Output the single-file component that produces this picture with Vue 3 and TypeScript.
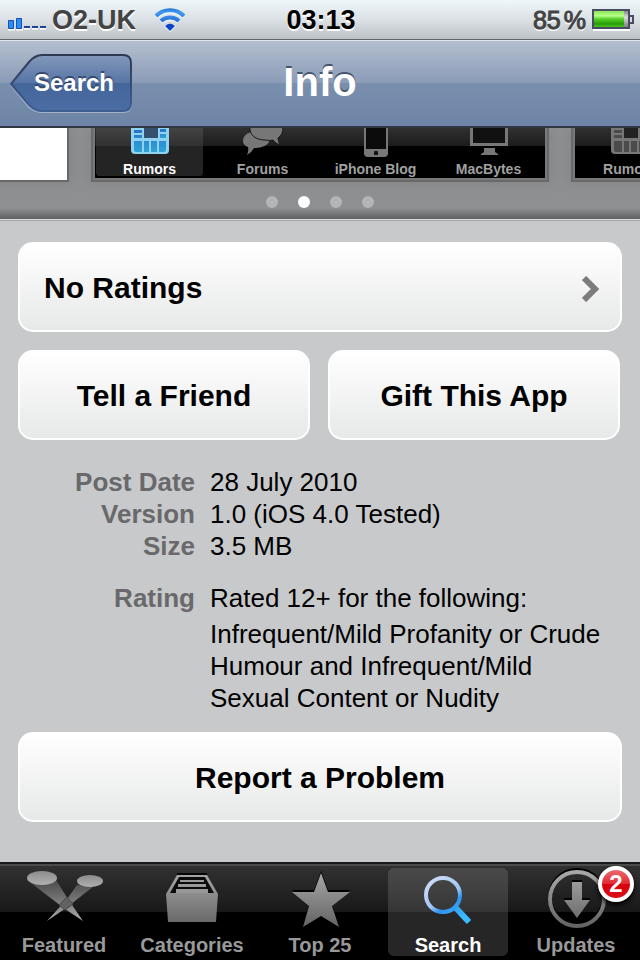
<script setup lang="ts">
import { ref } from 'vue'

type Kind = 'news' | 'chat' | 'phone' | 'monitor'

const shotTabs: { label: string; kind: Kind }[] = [
  { label: 'Rumors', kind: 'news' },
  { label: 'Forums', kind: 'chat' },
  { label: 'iPhone Blog', kind: 'phone' },
  { label: 'MacBytes', kind: 'monitor' },
]

const shots = [
  { id: 'first', tabs: [], blank: true, active: '' },
  { id: 'second', tabs: shotTabs, blank: false, active: 'Rumors' },
  { id: 'third', tabs: shotTabs.slice(0, 1), blank: false, active: '' },
]

const pages = [1, 2, 3, 4]
const page = ref(2)

const details = [
  { label: 'Post Date', value: '28 July 2010' },
  { label: 'Version', value: '1.0 (iOS 4.0 Tested)' },
  { label: 'Size', value: '3.5 MB' },
]

const tabs = ['Featured', 'Categories', 'Top 25', 'Search', 'Updates']
const current = ref('Search')
</script>

<template>
  <div class="screen">
    <header class="status">
      <div class="carrier">
        <svg class="signal" width="39" height="14" viewBox="0 0 39 14" aria-hidden="true">
          <path d="M0 12.500h7M8 12.500h7M16 11.500h6M24 11.500h6M32 11.500h6" stroke="#fff" stroke-width="2" />
          <path d="M.5 3.500h5v8h-5zM8.500 1.500h5v10h-5z" fill="#2b8df4" stroke="#1450b4" />
          <path d="M16 10h6M24 10h6M32 10h6" stroke="#1d3f96" stroke-width="2" />
        </svg>
        <span>O2-UK</span>
        <svg class="wifi" width="34" height="26" viewBox="0 0 34 26" aria-hidden="true">
          <defs>
            <linearGradient id="wifi" x1="0" y1="0" x2="0" y2="26" gradientUnits="userSpaceOnUse">
              <stop offset="0" stop-color="#1668cc" /><stop offset=".2" stop-color="#3f9bee" /><stop offset="1" stop-color="#0b3fc0" />
            </linearGradient>
          </defs>
          <path d="M17 25L11 19L17 16L23 19Z" fill="#fff" />
          <path d="M3 10A20 20 0 0 1 31 10M8 15A13 13 0 0 1 26 15" fill="none" stroke="#fff" stroke-width="4" />
          <path d="M3 9A20 20 0 0 1 31 9M8 14A13 13 0 0 1 26 14" fill="none" stroke="url(#wifi)" stroke-width="4" />
          <path d="M17 24L12 19Q17 14 22 19Z" fill="#0b43c4" />
        </svg>
      </div>
      <time class="clock">03:13</time>
      <div class="power">
        <span class="charge">85</span><span>%</span>
        <svg width="42" height="22" viewBox="0 0 42 22" aria-label="Battery">
          <defs>
            <linearGradient id="cell" x1="0" y1="0" x2="0" y2="1">
              <stop offset="0" stop-color="#8fe35c" /><stop offset=".3" stop-color="#b4ff86" />
              <stop offset=".5" stop-color="#59cf2c" /><stop offset=".8" stop-color="#279c07" /><stop offset="1" stop-color="#4bc51f" />
            </linearGradient>
            <linearGradient id="rest" x1="0" y1="0" x2="0" y2="1">
              <stop offset="0" stop-color="#777" /><stop offset=".4" stop-color="#ddd" /><stop offset="1" stop-color="#777" />
            </linearGradient>
          </defs>
          <path d="M1 21h37" stroke="#fff" stroke-width="2" />
          <rect x="1" y="1" width="36" height="18" fill="url(#rest)" stroke="#484c63" stroke-width="2" />
          <rect x="2" y="2" width="30" height="16" fill="url(#cell)" />
          <path d="M38 7h3v7h-3" fill="#ddd" stroke="#484c63" stroke-width="2" />
        </svg>
      </div>
    </header>

    <div class="navbar">
      <button class="back" type="button">
        <svg width="124" height="60" viewBox="0 0 124 60" aria-hidden="true">
          <defs>
            <linearGradient id="back" x1="0" y1="0" x2="0" y2="1">
              <stop offset="0" stop-color="#8399bb" /><stop offset=".5" stop-color="#5674a4" />
              <stop offset=".5" stop-color="#45669b" /><stop offset="1" stop-color="#4a6da4" />
            </linearGradient>
            <linearGradient id="edge" x1="0" y1="0" x2="0" y2="1">
              <stop offset="0" stop-color="#2c3a52" /><stop offset="1" stop-color="#3f5f92" />
            </linearGradient>
          </defs>
          <path d="M1 31L19 9Q25 2 33 2H113Q121 2 121 10V50Q121 58 113 58H33Q25 58 19 53Z" fill="none" stroke="#a3b2c9" stroke-width="2" />
          <path d="M1 30L19 8Q25 1 32 1H113Q121 1 121 9V49Q121 57 113 57H32Q25 57 19 51Z" fill="url(#back)" stroke="url(#edge)" stroke-width="2" />
        </svg>
        <span>Search</span>
      </button>
      <h1>Info</h1>
    </div>

    <section class="gallery" aria-label="Screenshots">
      <div class="shots">
        <div v-for="shot in shots" :key="shot.id" class="shot" :class="{ blank: shot.blank }">
          <div v-for="tab in shot.tabs" :key="tab.label" class="shot-tab" :class="{ on: tab.label === shot.active }">
            <svg v-if="tab.kind === 'news'" width="40" height="26" viewBox="0 0 40 26">
              <defs>
                <linearGradient id="panel" x1="0" y1="0" x2="0" y2="1">
                  <stop offset="0" stop-color="#2a72c8" /><stop offset="1" stop-color="#2fa4d8" />
                </linearGradient>
              </defs>
              <path class="tile" d="M1 0H39V22Q39 26 35 26H5Q1 26 1 22Z" />
              <path class="ink" d="M4 2h8v3H4zM4 7h8v3H4zM4 13h8v11H6q-2 0-2-2zM14 13h5v11h-5zM21 13h6v11h-6zM29 13h7v9q0 2-2 2h-5z" />
              <path class="photo" d="M14 0h14v10H14z" />
              <path class="ink" d="M30 1h6v3h-6zM30 6h6v4h-6z" />
            </svg>
            <svg v-else-if="tab.kind === 'chat'" width="42" height="27" viewBox="0 0 42 27">
              <path class="glyph" d="M1 13C1 7 7 3 16 4C25 5 29 9 27 14C25 18 18 20 12 20Q10 24 5 27Q7 22 6 19Q1 17 1 13Z" />
              <path class="glyph rim" d="M8 -1C7 7 14 12 23 12Q27 13 31 12Q34 16 38 17Q36 13 36 10Q41 7 41 -1Z" />
            </svg>
            <svg v-else-if="tab.kind === 'phone'" width="24" height="29" viewBox="0 0 24 29">
              <path class="glyph" d="M0 0H24V25Q24 29 20 29H4Q0 29 0 25Z" />
              <path d="M2 0H22V21H2Z" fill="#0c0c0c" /><rect x="10" y="23" width="4" height="4" rx="1" fill="#111" />
            </svg>
            <svg v-else width="40" height="27" viewBox="0 0 40 27">
              <path class="glyph" d="M1 0H39V18H1Z" /><path d="M4 0H36V15H4Z" fill="#111" />
              <path class="glyph" d="M15 20H26V24L29 26V27H12V26L15 24Z" />
            </svg>
            <span>{{ tab.label }}</span>
          </div>
        </div>
      </div>
      <div class="dots">
        <button v-for="n in pages" :key="n" type="button" :class="{ on: n === page }" :aria-label="`Page ${n}`" @click="page = n"></button>
      </div>
    </section>

    <main>
      <button class="card ratings" type="button">
        <span>No Ratings</span>
        <svg width="18" height="26" viewBox="0 0 18 26" aria-hidden="true"><path d="M2 2L13 13L2 24" fill="none" stroke="#7c7c7c" stroke-width="6" /></svg>
      </button>
      <div class="pair">
        <button class="card" type="button">Tell a Friend</button>
        <button class="card" type="button">Gift This App</button>
      </div>
      <dl>
        <template v-for="item in details" :key="item.label">
          <dt>{{ item.label }}</dt>
          <dd>{{ item.value }}</dd>
        </template>
        <dt class="spaced">Rating</dt>
        <dd class="spaced">
          <p>Rated 12+ for the following:</p>
          <p class="reason">Infrequent/Mild Profanity or Crude Humour and Infrequent/Mild Sexual Content or Nudity</p>
        </dd>
      </dl>
      <button class="card" type="button">Report a Problem</button>
    </main>

    <nav class="tabbar">
      <svg class="defs" width="0" height="0" aria-hidden="true">
        <defs>
          <linearGradient id="steel" x1="0" y1="4" x2="0" y2="58" gradientUnits="userSpaceOnUse">
            <stop offset="0" stop-color="#a8a8a8" /><stop offset="1" stop-color="#646464" />
          </linearGradient>
          <linearGradient id="beam" x1="0" y1="12" x2="0" y2="52" gradientUnits="userSpaceOnUse">
            <stop offset="0" stop-color="#555" stop-opacity=".8" /><stop offset=".7" stop-color="#8c8c8c" /><stop offset="1" stop-color="#aaa" />
          </linearGradient>
          <linearGradient id="lamp" x1="0" y1="0" x2="0" y2="1">
            <stop offset="0" stop-color="#8c8c8c" /><stop offset="1" stop-color="#b0b0b0" />
          </linearGradient>
          <linearGradient id="glow" x1="30" y1="8" x2="60" y2="52" gradientUnits="userSpaceOnUse">
            <stop offset="0" stop-color="#d3def7" /><stop offset=".5" stop-color="#9fc5f6" />
            <stop offset=".65" stop-color="#2f93f2" /><stop offset="1" stop-color="#3bbcff" />
          </linearGradient>
        </defs>
      </svg>
      <a v-for="tab in tabs" :key="tab" href="#" :class="{ on: tab === current }" @click.prevent="current = tab">
        <svg width="96" height="62" viewBox="0 0 96 62" aria-hidden="true">
          <g v-if="tab === 'Featured'">
            <path d="M61 17L51 31L31 53L50 40L78 18Z" fill="url(#beam)" />
            <path d="M15 15L40 12L52 31L67 53L49 41Z" fill="url(#beam)" />
            <path d="M51 29L57 36L49 42L43 37Z" fill="#626262" stroke="#484848" />
            <ellipse cx="26" cy="10" rx="15" ry="7" fill="url(#lamp)" />
            <ellipse cx="74" cy="13" rx="13" ry="6" fill="url(#lamp)" />
          </g>
          <g v-else-if="tab === 'Categories'" fill="url(#steel)">
            <path d="M33 6H63" stroke="#050505" stroke-width="2" />
            <path d="M33 7H63L74 26L72 54H24L22 26Z" />
            <path d="M35 9H61L70 25H26Z" fill="#0b0b0b" />
            <path d="M36 12H60V14H36ZM34 16H62V19H34ZM32 21H64V25H32Z" fill="#999" />
          </g>
          <g v-else-if="tab === 'Top 25'">
            <path d="M49 5L56 24H78L60 38L67 59L49 48L31 59L37 38L20 24H42Z" fill="#000" transform="translate(0 -2)" />
            <path d="M49 5L56 24H78L60 38L67 59L49 48L31 59L37 38L20 24H42Z" fill="url(#steel)" />
          </g>
          <g v-else-if="tab === 'Search'" fill="none" stroke="url(#glow)">
            <circle cx="43" cy="27" r="17" stroke-width="4" />
            <path d="M55 39L69 54" stroke-width="6" />
          </g>
          <g v-else>
            <circle cx="49" cy="29" r="27" fill="none" stroke="#000" stroke-width="4" />
            <circle cx="49" cy="31" r="27" fill="none" stroke="url(#steel)" stroke-width="4" />
            <path d="M44 12H54V14H44ZM36 30H62V32H36Z" fill="#000" />
            <path d="M44 14H54V32H62L49 50L36 32H44Z" fill="url(#steel)" />
          </g>
        </svg>
        <span>{{ tab }}</span>
        <b v-if="tab === 'Updates'" class="badge">2</b>
      </a>
    </nav>
  </div>
</template>

<style>
body {
  margin: 0;
  background: #c8c9cb;
}
</style>

<style scoped>
* {
  box-sizing: border-box;
}
.screen {
  display: flex;
  flex-direction: column;
  min-height: 100vh;
  overflow: hidden;
  font-family: "Liberation Sans", Arial, sans-serif;
  color: #000;
  background: #c8c9cb;
}
button {
  margin: 0;
  padding: 0;
  border: 0;
  background: none;
  font: inherit;
  color: inherit;
}
svg {
  display: block;
  flex: none;
}
.status {
  display: grid;
  grid-template-columns: 1fr auto 1fr;
  align-items: center;
  height: 40px;
  padding: 0 6px 0 8px;
  border-bottom: 1px solid #5f656b;
  background: linear-gradient(#eff7fa, #dbe1e4 50%, #bcc2c5);
  font-size: 27px;
  font-weight: bold;
  line-height: 36px;
  text-shadow: 0 2px #fff;
}
.carrier,
.power {
  display: flex;
  align-items: center;
  color: #434343;
}
.carrier {
  gap: 5px;
}
.signal {
  margin-top: 8px;
}
.wifi {
  margin-left: 12px;
}
.power {
  justify-content: flex-end;
  font-size: 25px;
  font-weight: normal;
  -webkit-text-stroke: 1px #434343;
}
.power svg {
  margin-left: 6px;
}
.charge {
  margin-right: 3px;
}
.navbar {
  display: grid;
  grid-template-columns: 1fr auto 1fr;
  align-items: center;
  height: 88px;
  padding: 0 10px;
  border-top: 1px solid #e0e6ed;
  border-bottom: 2px solid #2d3642;
  background: linear-gradient(#b3bfcf, #8a9bb7 50%, #7a8fae 50%, #6d84a6);
  color: #fff;
  text-shadow: 0 -2px #46556d;
}
.back {
  display: grid;
  justify-self: start;
  align-items: center;
  font-size: 24px;
  font-weight: bold;
  text-shadow: 0 -2px #34496d;
}
.back svg,
.back span {
  grid-area: 1 / 1;
}
.back span {
  padding: 0 0 2px 4px;
}
h1 {
  margin: 0;
  padding-bottom: 4px;
  font-size: 40px;
  line-height: 48px;
}
.gallery {
  display: flex;
  flex-direction: column;
  align-items: center;
  height: 93px;
  overflow: hidden;
  border-bottom: 1px solid #a2a3a5;
  background: linear-gradient(#8f9092 80px, #606163 91px, #dcdcdd 91px);
}
.shots {
  display: flex;
  gap: 22px;
}
.shot {
  display: flex;
  flex: none;
  width: 458px;
  height: 54px;
  padding: 0 2px 2px 0;
  border: solid #68696b;
  border-width: 0 2px 2px;
  box-shadow: inset 2px 0 #79797a, inset -2px 0 #79797a, inset 0 -2px #79797a, 0 0 12px #7779;
  background: linear-gradient(#303030, #1c1c1c 18px, #000 18px);
}
.shot.blank {
  background: #fff;
  box-shadow: 0 0 12px #7779;
}
.shot-tab {
  display: flex;
  flex: none;
  flex-direction: column;
  align-items: center;
  justify-content: space-between;
  width: 25%;
  padding-bottom: 2px;
  font-size: 14px;
  font-weight: bold;
  line-height: 14px;
  white-space: nowrap;
  color: #a0a0a0;
}
.shot-tab.on {
  border: solid transparent;
  border-width: 0 3px 2px;
  padding-bottom: 0;
  border-radius: 0 0 6px 6px;
  background: linear-gradient(#434343, #303030 18px, #242424 18px) padding-box;
  color: #fff;
}
.glyph {
  fill: #777;
}
.rim {
  stroke: #181818;
}
.tile {
  fill: #777;
}
.ink {
  fill: #4b4b4b;
}
.photo {
  fill: #222;
}
.on .tile {
  fill: #8fd3f0;
}
.on .ink {
  fill: url(#panel);
}
.on .photo {
  fill: #34506c;
}
.dots {
  display: flex;
  gap: 20px;
  margin-top: 14px;
}
.dots button {
  width: 12px;
  height: 12px;
  border-radius: 50%;
  background: #b4b5b7;
}
.dots button.on {
  background: #fff;
}
main {
  display: flex;
  flex: 1;
  flex-direction: column;
  gap: 18px;
  padding: 21px 18px 40px;
}
.card {
  min-height: 90px;
  padding-top: 2px;
  border: 2px solid #fff;
  border-radius: 15px;
  background: linear-gradient(#fff, #e7e8e8);
  font-size: 30px;
  font-weight: bold;
}
.ratings {
  display: flex;
  align-items: center;
  justify-content: space-between;
  padding: 2px 20px 0 24px;
}
.ratings svg {
  margin-top: 2px;
}
.pair {
  display: grid;
  grid-template-columns: 1fr 1fr;
  gap: 18px;
  padding-right: 2px;
}
dl {
  display: grid;
  grid-template-columns: 177px 1fr;
  column-gap: 15px;
  margin: 0;
  padding: 8px 0 0;
  font-size: 26px;
  line-height: 32px;
}
dt {
  text-align: right;
  font-weight: bold;
  color: #69696b;
}
dd,
p {
  margin: 0;
}
.spaced {
  padding-top: 20px;
}
.reason {
  padding: 4px 8px 0 0;
}
.tabbar {
  display: grid;
  grid-template-columns: repeat(5, 1fr);
  grid-template-rows: 96px;
  height: 98px;
  border-top: 2px solid #1a1a1a;
  box-shadow: inset 0 2px #4b4b4b;
  background: linear-gradient(#323232, #181818 48px, #000 48px);
}
.defs {
  position: absolute;
}
.tabbar a {
  position: relative;
  display: flex;
  flex-direction: column;
  align-items: center;
  margin: 4px;
  border-radius: 6px;
  font-size: 20px;
  font-weight: bold;
  line-height: 30px;
  white-space: nowrap;
  text-decoration: none;
  color: #999;
}
.tabbar a.on {
  background: linear-gradient(#4a4a4a, #353535 44px, #262626 44px);
  color: #fff;
}
.badge {
  position: absolute;
  top: -2px;
  right: 2px;
  width: 36px;
  height: 36px;
  border: 4px solid #fff;
  border-radius: 50%;
  background: linear-gradient(#ec6a70, #df2a31 50%, #d4000b 50%, #dc1018);
  box-shadow: 0 3px 5px #000;
  font-size: 24px;
  line-height: 28px;
  text-align: center;
  color: #fff;
}
</style>
